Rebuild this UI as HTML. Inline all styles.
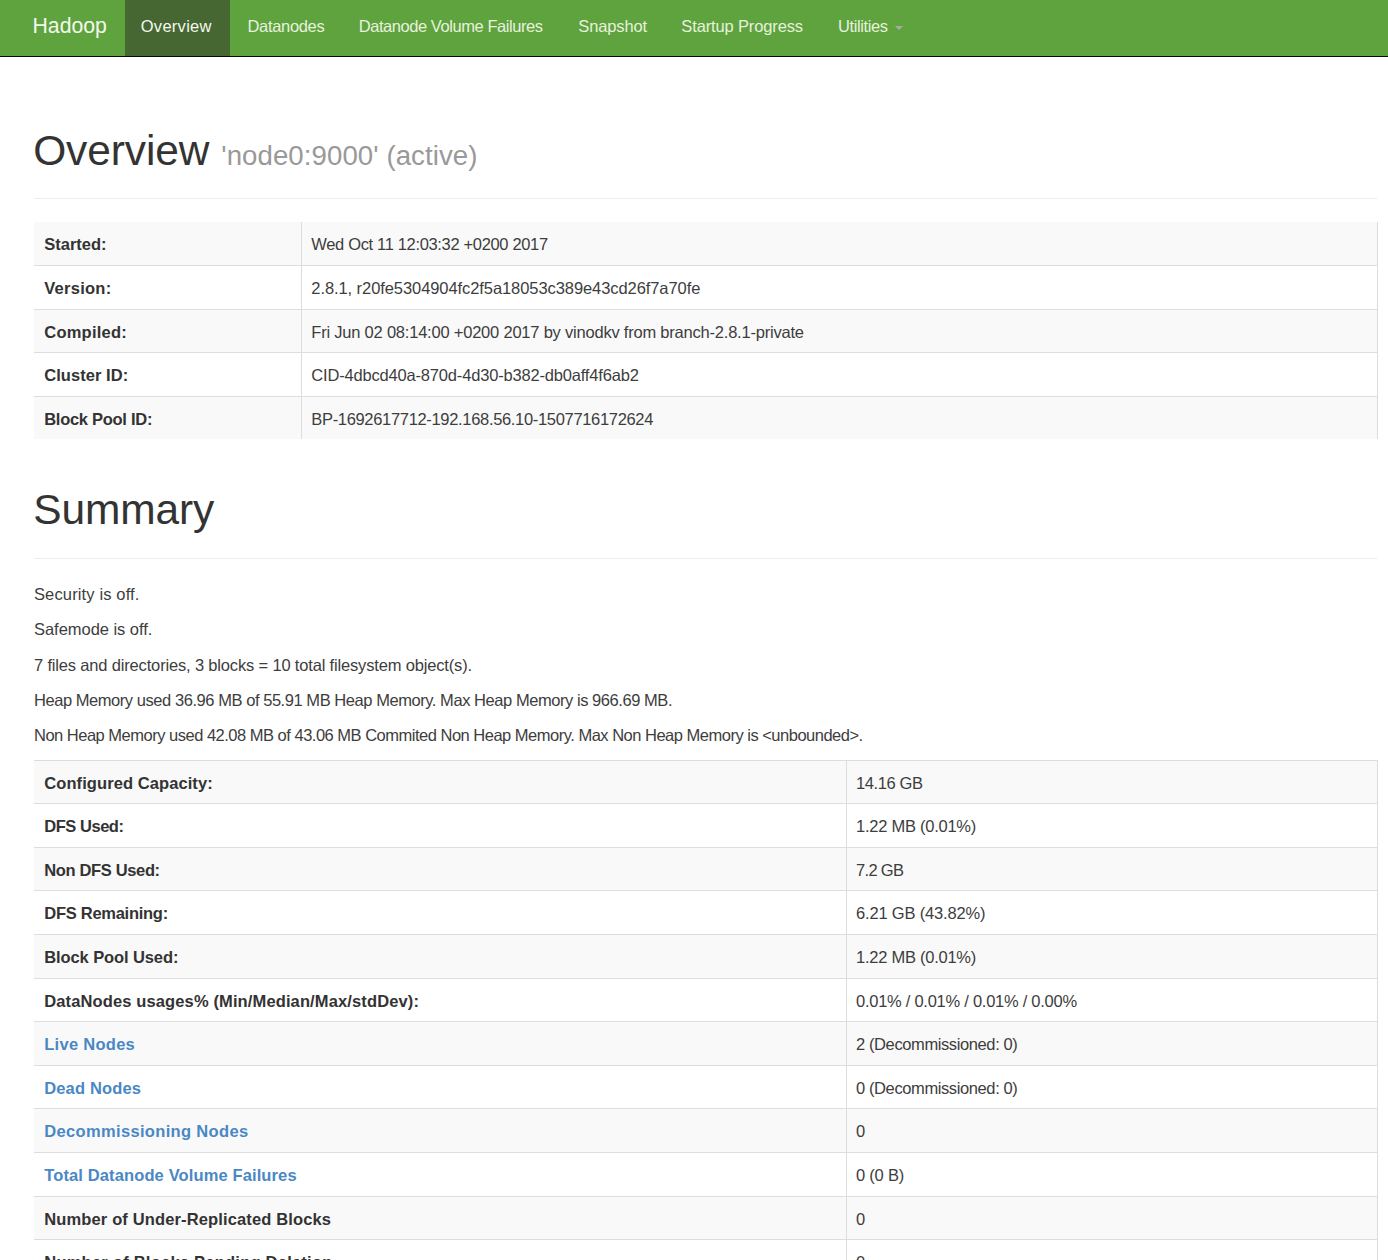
<!DOCTYPE html>
<html>
<head>
<meta charset="utf-8">
<title>Namenode information</title>
<style>
html { zoom: 1.18; }
* { box-sizing: border-box; }
body {
  margin: 0; padding: 0;
  font-family: "Liberation Sans", sans-serif;
  font-size: 14px; line-height: 20px; color: #333; background: #fff;
  overflow: hidden;
}
.wrap { position: relative; top: -2.3px; }
.navbar {
  position: relative; height: 51px; background: #5fa33e;
  border-bottom: 1px solid #080808; margin-bottom: 0;
}
.container { position: relative; margin-left: 13.8px; width: 1170px; padding: 0 15px; }
.main { padding-top: 0.01px; }
.brand { float: left; margin-left: -16.25px; padding: 15px; height: 50px; font-size: 18px; line-height: 20px; color: #f2f8ea; white-space: nowrap; }
.nav { float: left; margin: 0; padding: 0; list-style: none; }
.nav li { float: left; }
.nav a { display: block; padding: 15px; line-height: 20px; color: #e6f2dc; text-decoration: none; white-space: nowrap; }
.nav li.active a { background: #466632; color: #f4f8ee; }
.caret { display: inline-block; width: 0; height: 0; margin-left: 2px; vertical-align: middle;
  border-top: 4px solid #aaa; border-left: 4px solid transparent; border-right: 4px solid transparent; }
.page-header { padding-bottom: 9px; margin: 40px 1.5px 20px 0; border-bottom: 1px solid #eee; }
.ph1 { margin-top: 60px; margin-bottom: 20px; padding-bottom: 9.4px; }
.ph2 { padding-bottom: 11px; }
h1 { font-size: 36px; font-weight: 500; line-height: 39.6px; margin: 20px 0 10px; color: #333; white-space: nowrap; }
h1 small { font-size: 65%; font-weight: normal; line-height: 1; color: #999; }
p { margin: 0 0 10px; white-space: nowrap; }
table { width: 1139.2px; border-collapse: collapse; border-spacing: 0; margin-bottom: 20px; }
td, th { padding: 8px; line-height: 20.1px; vertical-align: top; text-align: left; border-top: 1px solid #ddd; white-space: nowrap; }
th { font-weight: bold; padding-left: 8.7px; }
td { border-left: 1px solid #ddd; border-right: 1px solid #ddd; }
tr:nth-child(odd) th, tr:nth-child(odd) td { background: #f9f9f9; }
.t1 tr:first-child th, .t1 tr:first-child td { border-top: 0; }
th.c1 { width: 226.6px; }
th.c2 { width: 689px; }
a.lnk { color: #4a88c4; text-decoration: none; }
#n1 { margin-left: -1.27px; margin-right: 0.85px; }
#n2 { margin-left: -0.5px; }
#n3 { margin-left: -0.93px; }
#n4 { margin-left: 0.34px; }
#n5 { margin-left: -0.85px; }
#n6 { margin-left: -0.17px; }
td span, th span { position: relative; top: 1.27px; }
.t2 td span { margin-left: -0.8px; }
h1 { margin-left: -0.7px; }
p, td { color: #3d3d3d; }
</style>
</head>
<body>
<div class="wrap">
<div class="navbar"><div class="container">
<div class="brand"><span id="brand">Hadoop</span></div>
<ul class="nav">
<li class="active"><a><span id="n1" style="letter-spacing:0.230px">Overview</span></a></li>
<li><a><span id="n2" style="letter-spacing:-0.275px">Datanodes</span></a></li>
<li><a><span id="n3" style="letter-spacing:-0.372px">Datanode Volume Failures</span></a></li>
<li><a><span id="n4" style="letter-spacing:-0.121px">Snapshot</span></a></li>
<li><a><span id="n5" style="letter-spacing:-0.119px">Startup Progress</span></a></li>
<li><a><span id="n6" style="letter-spacing:-0.339px">Utilities</span> <b class="caret"></b></a></li>
</ul>
</div></div>
<div class="container main">
<div class="page-header ph1"><h1><span id="h1a" style="letter-spacing:-0.073px">Overview</span> <small id="h1s" style="letter-spacing:0.068px">'node0:9000' (active)</small></h1></div>
<table class="t1">
<tr><th class="c1"><span id="t1l0">Started:</span></th><td><span id="t1v0" style="letter-spacing:-0.286px">Wed Oct 11 12:03:32 +0200 2017</span></td></tr>
<tr><th><span id="t1l1" style="letter-spacing:0.218px">Version:</span></th><td><span id="t1v1" style="letter-spacing:-0.065px">2.8.1, r20fe5304904fc2f5a18053c389e43cd26f7a70fe</span></td></tr>
<tr><th><span id="t1l2" style="letter-spacing:0.201px">Compiled:</span></th><td><span id="t1v2" style="letter-spacing:-0.181px">Fri Jun 02 08:14:00 +0200 2017 by vinodkv from branch-2.8.1-private</span></td></tr>
<tr><th><span id="t1l3" style="letter-spacing:0.042px">Cluster ID:</span></th><td><span id="t1v3" style="letter-spacing:-0.152px">CID-4dbcd40a-870d-4d30-b382-db0aff4f6ab2</span></td></tr>
<tr><th><span id="t1l4" style="letter-spacing:-0.241px">Block Pool ID:</span></th><td><span id="t1v4" style="letter-spacing:-0.275px">BP-1692617712-192.168.56.10-1507716172624</span></td></tr>
</table>
<div class="page-header ph2"><h1><span id="h1b" style="letter-spacing:-0.085px">Summary</span></h1></div>
<p><span id="p0" style="letter-spacing:0.119px">Security is off.</span></p>
<p><span id="p1" style="letter-spacing:-0.028px">Safemode is off.</span></p>
<p><span id="p2" style="letter-spacing:-0.141px">7 files and directories, 3 blocks = 10 total filesystem object(s).</span></p>
<p><span id="p3" style="letter-spacing:-0.378px">Heap Memory used 36.96 MB of 55.91 MB Heap Memory. Max Heap Memory is 966.69 MB.</span></p>
<p><span id="p4" style="letter-spacing:-0.423px">Non Heap Memory used 42.08 MB of 43.06 MB Commited Non Heap Memory. Max Non Heap Memory is &lt;unbounded&gt;.</span></p>
<table class="t2">
<tr><th class="c2"><span id="t2l0" style="letter-spacing:0.071px">Configured Capacity:</span></th><td><span id="t2v0" style="letter-spacing:-0.327px">14.16 GB</span></td></tr>
<tr><th><span id="t2l1" style="letter-spacing:-0.392px">DFS Used:</span></th><td><span id="t2v1" style="letter-spacing:-0.212px">1.22 MB (0.01%)</span></td></tr>
<tr><th><span id="t2l2" style="letter-spacing:-0.297px">Non DFS Used:</span></th><td><span id="t2v2" style="letter-spacing:-0.576px">7.2 GB</span></td></tr>
<tr><th><span id="t2l3" style="letter-spacing:-0.228px">DFS Remaining:</span></th><td><span id="t2v3" style="letter-spacing:-0.147px">6.21 GB (43.82%)</span></td></tr>
<tr><th><span id="t2l4" style="letter-spacing:-0.085px">Block Pool Used:</span></th><td><span id="t2v4" style="letter-spacing:-0.212px">1.22 MB (0.01%)</span></td></tr>
<tr><th><span id="t2l5" style="letter-spacing:0.107px">DataNodes usages% (Min/Median/Max/stdDev):</span></th><td><span id="t2v5" style="letter-spacing:-0.221px">0.01% / 0.01% / 0.01% / 0.00%</span></td></tr>
<tr><th><a class="lnk"><span id="t2l6" style="letter-spacing:0.235px">Live Nodes</span></a></th><td><span id="t2v6" style="letter-spacing:-0.331px">2 (Decommissioned: 0)</span></td></tr>
<tr><th><a class="lnk"><span id="t2l7" style="letter-spacing:0.122px">Dead Nodes</span></a></th><td><span id="t2v7" style="letter-spacing:-0.331px">0 (Decommissioned: 0)</span></td></tr>
<tr><th><a class="lnk"><span id="t2l8" style="letter-spacing:0.288px">Decommissioning Nodes</span></a></th><td><span id="t2v8">0</span></td></tr>
<tr><th><a class="lnk"><span id="t2l9" style="letter-spacing:0.105px">Total Datanode Volume Failures</span></a></th><td><span id="t2v9" style="letter-spacing:-0.184px">0 (0 B)</span></td></tr>
<tr><th><span id="t2l10" style="letter-spacing:0.117px">Number of Under-Replicated Blocks</span></th><td><span id="t2v10">0</span></td></tr>
<tr><th><span id="t2l11" style="letter-spacing:0.200px">Number of Blocks Pending Deletion</span></th><td><span id="t2v11">0</span></td></tr>
</table>
</div>
</div>
</body>
</html>
